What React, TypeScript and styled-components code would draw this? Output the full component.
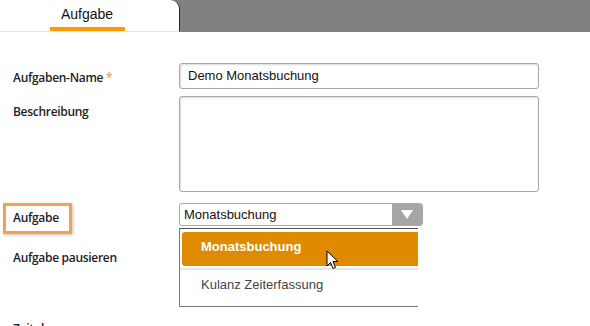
import styled, { createGlobalStyle } from 'styled-components';

const GlobalStyle = createGlobalStyle`
  html, body { margin: 0; padding: 0; background: #fff; }
  body { width: 590px; height: 326px; overflow: hidden; font-family: "Open Sans", "Liberation Sans", sans-serif; }
`;

const Page = styled.div`
  position: relative;
  width: 590px;
  height: 326px;
  overflow: hidden;
`;

const TabBar = styled.div`
  display: flex;
  height: 32px;
  background: #808080;
`;

const Tab = styled.div`
  width: 180px;
  background: #fff;
  border-right: 1px solid #222;
  border-top-right-radius: 9px;
  border-bottom: 1px solid #e4e4e4;
  box-sizing: border-box;
  display: flex;
  justify-content: center;
`;

const TabLabel = styled.div`
  margin-left: -5px;
  width: 75px;
  height: 31px;
  box-sizing: border-box;
  border-bottom: 4px solid #ff9a00;
  text-align: center;
  font-family: "Liberation Sans", Arial, sans-serif;
  font-size: 14px;
  line-height: 29px;
  color: #111;
`;

const Form = styled.div`
  display: grid;
  grid-template-columns: 166px 360px;
  row-gap: 7px;
  padding: 31px 0 0 13px;
`;

const Label = styled.div<{ $top?: number }>`
  font-size: 12px;
  font-weight: 600;
  color: #222;
  padding-top: ${p => p.$top ?? 6}px;
  letter-spacing: -0.3px;
`;

const Star = styled.span`
  color: #e8a060;
`;

const Highlight = styled.div`
  justify-self: start;
  margin-left: -10px;
  padding: 3px 10px 5px 7px;
  border: 3px solid #f5a04e;
  box-shadow: 1px 1px 3px rgba(0, 0, 0, 0.25);
  font-size: 12px;
  font-weight: 600;
  line-height: 17px;
  color: #222;
  letter-spacing: -0.3px;
`;

const Input = styled.div`
  height: 26px;
  box-sizing: border-box;
  border: 1px solid #a8a8a8;
  border-radius: 3px;
  box-shadow: inset 1px 1px 2px rgba(0, 0, 0, 0.15);
  padding: 0 8px;
  font-family: "Liberation Sans", Arial, sans-serif;
  font-size: 13px;
  line-height: 24px;
  color: #111;
`;

const TextArea = styled(Input)`
  height: 96px;
  margin-bottom: 4px;
`;

const SelectWrap = styled.div`
  position: relative;
  width: 244px;
`;

const Select = styled.div`
  display: flex;
  height: 23px;
  box-sizing: border-box;
  border: 1px solid #a8a8a8;
  border-radius: 3px;
  overflow: hidden;
`;

const SelectValue = styled.div`
  flex: 1;
  padding-left: 4px;
  font-family: "Liberation Sans", Arial, sans-serif;
  font-size: 13px;
  line-height: 21px;
  color: #111;
`;

const Arrow = styled.div`
  width: 30px;
  background: #a6a6a6;
  display: flex;
  align-items: center;
  justify-content: center;
`;

const Menu = styled.div`
  position: absolute;
  left: 0;
  top: 25px;
  width: 239px;
  height: 79px;
  box-sizing: border-box;
  border: 1px solid #777;
  border-right: none;
  border-top: 1px solid #555;
  background: #fff;
  padding-top: 3px;
  z-index: 2;
`;

const Option = styled.div<{ $active?: boolean }>`
  height: 34px;
  margin-left: ${p => (p.$active ? 2 : 0)}px;
  padding-left: ${p => (p.$active ? 19 : 21)}px;
  border-radius: ${p => (p.$active ? '3px 0 0 3px' : '0')};
  background: ${p => (p.$active ? '#e08a00' : '#fff')};
  color: ${p => (p.$active ? '#fff' : '#444')};
  font-weight: ${p => (p.$active ? 700 : 400)};
  font-family: "Liberation Sans", Arial, sans-serif;
  font-size: 13px;
  line-height: 30px;
`;

const Divider = styled.div`
  height: 2px;
  margin-top: 2px;
  background: #e6e6e6;
`;

const Cursor = styled.svg`
  position: absolute;
  left: 146px;
  top: 21px;
`;

const Empty = styled.div``;

const App = () => (
  <Page>
    <GlobalStyle />
    <TabBar>
      <Tab>
        <TabLabel>Aufgabe</TabLabel>
      </Tab>
    </TabBar>
    <Form>
      <Label>
        Aufgaben-Name <Star>*</Star>
      </Label>
      <Input>Demo Monatsbuchung</Input>
      <Label $top={7}>Beschreibung</Label>
      <TextArea />
      <Highlight>Aufgabe</Highlight>
      <SelectWrap>
        <Select>
          <SelectValue>Monatsbuchung</SelectValue>
          <Arrow>
            <svg width="12" height="9" viewBox="0 0 12 9">
              <path d="M0 0 L12 0 L6 9 Z" fill="#fff" />
            </svg>
          </Arrow>
        </Select>
        <Menu>
          <Option $active>Monatsbuchung</Option>
          <Divider />
          <Option>Kulanz Zeiterfassung</Option>
          <Cursor width="14" height="21" viewBox="0 0 14 21">
            <path d="M1 1 L1 16 L4.5 12.5 L7 18.5 L9.5 17.5 L7 11.5 L12 11.5 Z" fill="#fff" stroke="#000" strokeWidth="1" strokeLinejoin="round" />
          </Cursor>
        </Menu>
      </SelectWrap>
      <Label $top={8}>Aufgabe pausieren</Label>
      <Empty />
      <Label $top={47}>Zeitplan</Label>
      <Empty />
    </Form>
  </Page>
);

export default App;
